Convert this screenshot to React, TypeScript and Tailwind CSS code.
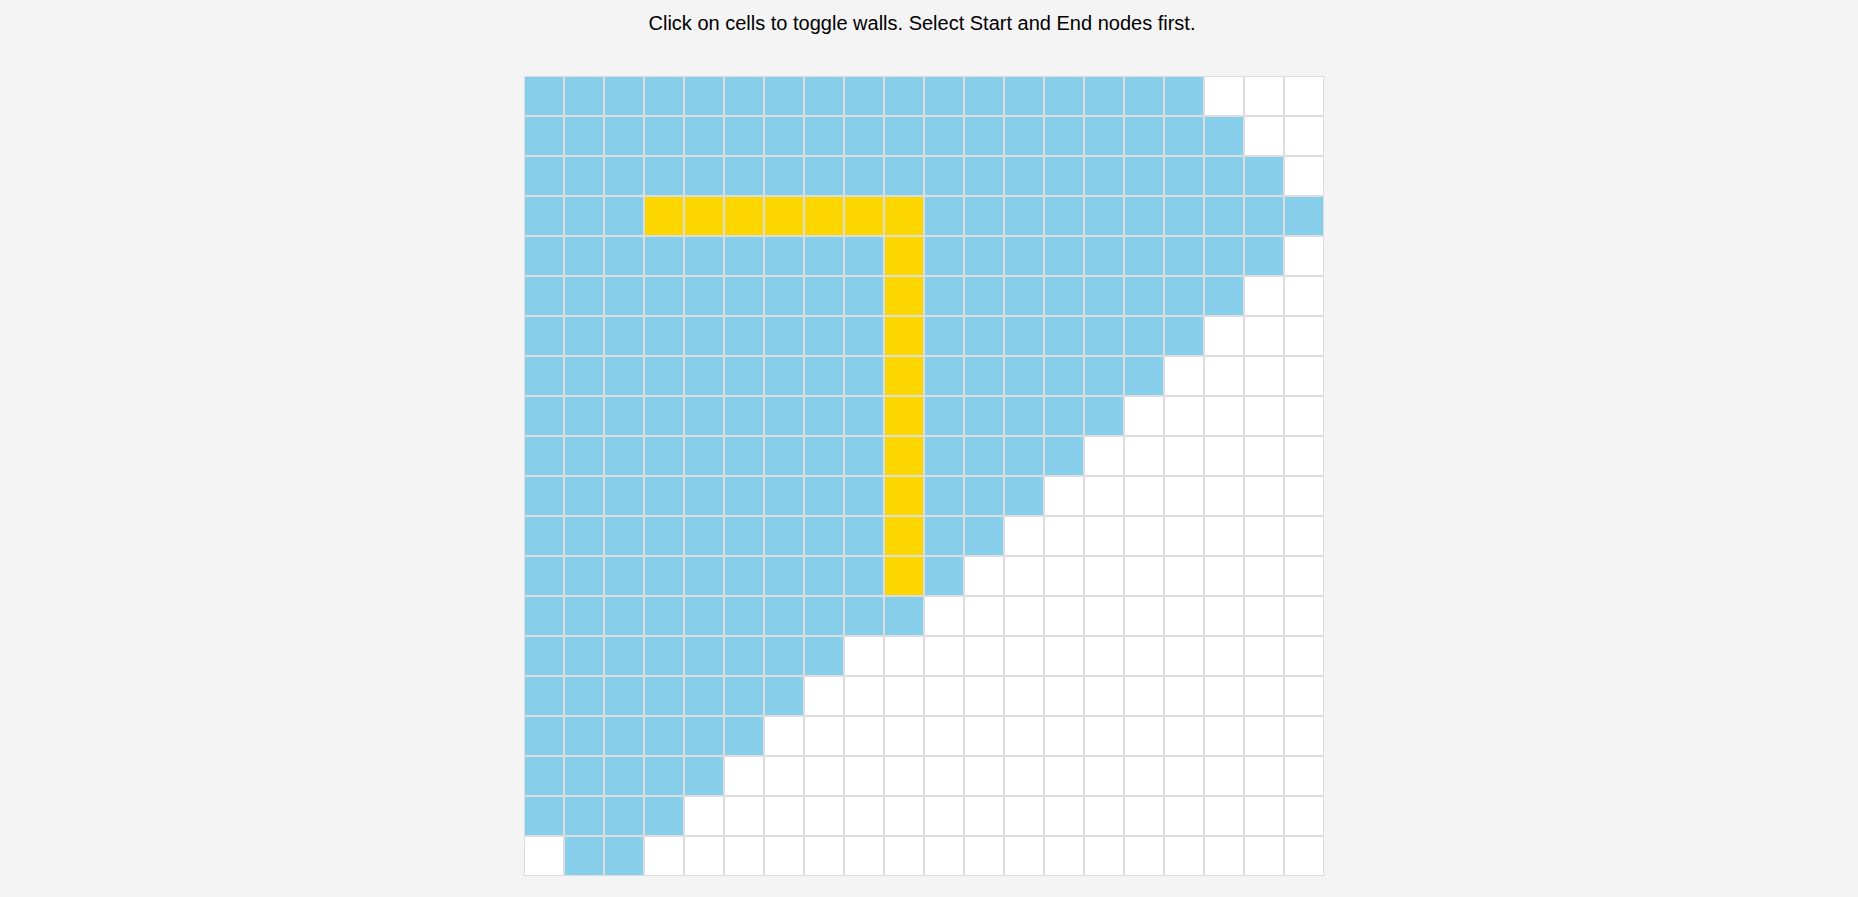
const ROWS = 20;
const COLS = 20;

// how many cells from the left are visited, per row
const visitedCount = [17, 18, 19, 20, 19, 18, 17, 16, 15, 14, 13, 12, 11, 10, 8, 7, 6, 5, 4, 0];

const isPath = (r: number, c: number) => (r === 3 && c >= 3 && c <= 9) || (c === 9 && r >= 3 && r <= 12);

const isVisited = (r: number, c: number) => {
  if (r === 19) return c === 1 || c === 2;
  return c < visitedCount[r];
};

export default function App() {
  const cells = [];
  for (let r = 0; r < ROWS; r++) {
    for (let c = 0; c < COLS; c++) {
      const color = isPath(r, c) ? "bg-[#ffd700]" : isVisited(r, c) ? "bg-[#87ceeb]" : "bg-white";
      cells.push(<div key={`${r}-${c}`} className={`h-10 w-10 border border-[#dddddd] ${color}`} />);
    }
  }

  return (
    <div className="min-h-[897px] bg-[#f4f4f4] font-['Liberation_Sans',Arial,sans-serif] text-black">
      <p className="pt-[12px] pr-[14px] text-center text-[20px] leading-[23px]">
        Click on cells to toggle walls. Select Start and End nodes first.
      </p>
      <div className="mt-[41px] flex justify-center pr-[10px]">
        <div className="grid grid-cols-[repeat(20,40px)]">{cells}</div>
      </div>
    </div>
  );
}
